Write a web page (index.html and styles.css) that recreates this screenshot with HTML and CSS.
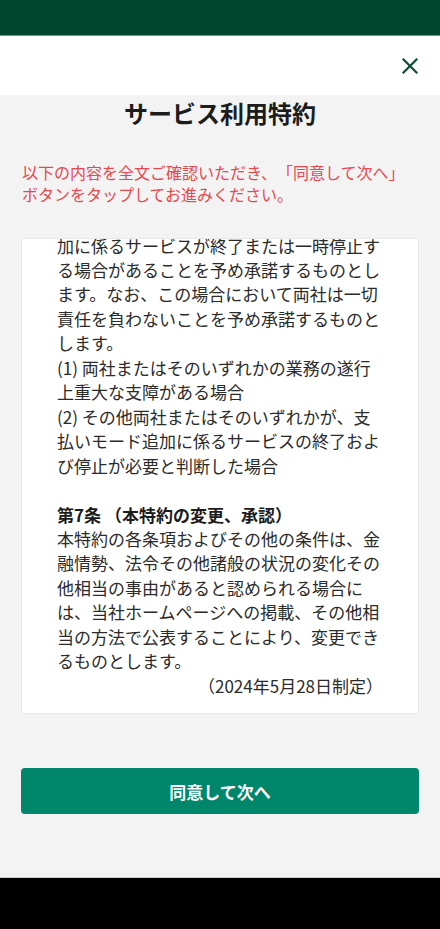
FILE: index.html
```html
<!DOCTYPE html>
<html lang="ja">
<head>
<meta charset="utf-8">
<title>サービス利用特約</title>
<link rel="stylesheet" href="styles.css">
</head>
<body>
<div class="screen">
  <div class="statusbar"></div>
  <header class="header">
    <button class="close" aria-label="閉じる">
      <svg width="16" height="16" viewBox="0 0 16 16"><path d="M1.5 1.5 L14.5 14.5 M14.5 1.5 L1.5 14.5" stroke="#0b4c35" stroke-width="2.2" fill="none" stroke-linecap="square"/></svg>
    </button>
  </header>
  <main class="main">
    <h1 class="title">サービス利用特約</h1>
    <p class="notice">以下の内容を全文ご確認いただき、「同意して次へ」ボタンをタップしてお進みください。</p>
    <div class="terms">
      <div class="terms-body">
        <p class="para">加に係るサービスが終了または一時停止する場合があることを予め承諾するものとします。なお、この場合において両社は一切責任を負わないことを予め承諾するものとします。</p>
        <p class="para">(1) 両社またはそのいずれかの業務の遂行上重大な支障がある場合</p>
        <p class="para">(2) その他両社またはそのいずれかが、支払いモード追加に係るサービスの終了および停止が必要と判断した場合</p>
        <p class="para blank">&nbsp;</p>
        <p class="para heading">第7条 （本特約の変更、承認）</p>
        <p class="para">本特約の各条項およびその他の条件は、金融情勢、法令その他諸般の状況の変化その他相当の事由があると認められる場合には、当社ホームページへの掲載、その他相当の方法で公表することにより、変更できるものとします。</p>
        <p class="para date">（2024年5月28日制定）</p>
      </div>
    </div>
    <button class="agree">同意して次へ</button>
  </main>
  <div class="navbar"></div>
</div>
</body>
</html>
```
FILE: styles.css
```css
* { box-sizing: border-box; }
html, body { margin: 0; padding: 0; }
body {
  font-family: "Noto Sans CJK JP", "Noto Sans", sans-serif;
  background: #000;
  text-spacing-trim: space-all;
}
.screen {
  width: 440px;
  height: 929px;
  display: flex;
  flex-direction: column;
}
.statusbar {
  height: 36px;
  background: #00462f;
  border-bottom: 1px solid #6f9686;
  flex: none;
}
.header {
  height: 59px;
  background: #fff;
  display: flex;
  justify-content: flex-end;
  align-items: center;
  padding-right: 22px;
  flex: none;
}
.close {
  border: 0;
  background: none;
  padding: 0;
  width: 16px;
  height: 16px;
  display: flex;
}
.main {
  flex: 1;
  background: #f3f3f3;
  display: flex;
  flex-direction: column;
  padding: 0 21px;
}
.title {
  margin: 0;
  text-align: center;
  font-size: 24px;
  line-height: 36px;
  font-weight: 700;
  color: #1c1c1c;
}
.notice {
  margin: 31px 1px 0;
  font-size: 16px;
  line-height: 21.6px;
  color: #e8474f;
  text-spacing-trim: space-all;
}
.terms {
  margin-top: 33px;
  height: 476px;
  background: #fff;
  border: 1px solid #e8e8e8;
  overflow: hidden;
  display: flex;
  flex-direction: column;
  justify-content: flex-end;
  padding: 0 35px 15px;
}
.terms-body {
  flex: none;
}
.para {
  margin: 0;
  font-size: 17px;
  line-height: 24.45px;
  color: #2b2b2b;
}
.heading {
  font-weight: 700;
  color: #1c1c1c;
}
.date {
  text-align: right;
}
.agree {
  margin-top: 54px;
  height: 46px;
  border: 0;
  border-radius: 4px;
  background: #00866b;
  color: #fff;
  font-family: "Noto Sans CJK JP", "Noto Sans", sans-serif;
  font-size: 17px;
  font-weight: 700;
  flex: none;
}
.navbar {
  height: 52px;
  background: #000;
  border-top: 1px solid #c9c9c9;
  flex: none;
}
```
